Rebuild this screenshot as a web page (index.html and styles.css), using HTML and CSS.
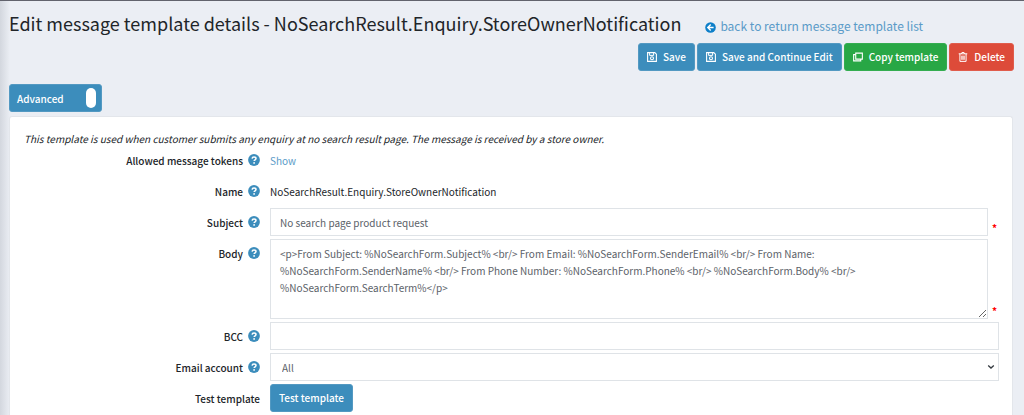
FILE: index.html
```html
<!DOCTYPE html>
<html lang="en">
<head>
    <meta charset="UTF-8">
    <meta name="viewport" content="width=device-width, initial-scale=1.0">
    <title>Edit message template details</title>
    <link rel="stylesheet" href="styles.css">
</head>
<body>
    <!-- shared icons -->
    <svg class="icon-defs" width="0" height="0" aria-hidden="true">
        <symbol id="icon-save" viewBox="0 0 10 10">
            <path d="M.6 .6h7.2l1.6 1.6v7.2H.6z" fill="none" stroke="currentColor" stroke-width="1.1"/>
            <path d="M2.6 1v2.4h4V1" fill="none" stroke="currentColor" stroke-width="1"/>
            <circle cx="5" cy="6.3" r="1.5" fill="none" stroke="currentColor" stroke-width="1.1"/>
        </symbol>
        <symbol id="icon-copy" viewBox="0 0 11 10">
            <path d="M3 .7h7.3v6.6H3z" fill="none" stroke="currentColor" stroke-width="1.2"/>
            <path d="M3 2.4H.7v6.9h7.8v-2" fill="none" stroke="currentColor" stroke-width="1.2"/>
        </symbol>
        <symbol id="icon-trash" viewBox="0 0 10 11">
            <path d="M.3 2h9.4M3.2 2l.6-1.4h2.4L6.8 2M1.6 2v8.3h6.8V2M3.7 4v4.6M5 4v4.6M6.3 4v4.6" fill="none" stroke="currentColor" stroke-width="1.1"/>
        </symbol>
        <symbol id="icon-back" viewBox="0 0 11 11">
            <circle cx="5.5" cy="5.5" r="5.3" fill="currentColor"/>
            <path d="M5.7 2.6L2.8 5.5l2.9 2.9M3 5.5h5.6" fill="none" stroke="#fff" stroke-width="1.4"/>
        </symbol>
        <symbol id="icon-help" viewBox="0 0 12 12">
            <circle cx="6" cy="6" r="5.9" fill="currentColor"/>
            <path d="M4.1 4.6C4.2 3.4 5 2.9 6 2.9c1.1 0 2 .6 2 1.6 0 1.3-1.9 1.3-1.9 2.6" fill="none" stroke="#fff" stroke-width="1.5"/>
            <circle cx="6.1" cy="8.9" r=".9" fill="#fff"/>
        </symbol>
    </svg>

    <div class="content-wrapper">
        <header class="content-header">
            <div class="title-row">
                <h1>Edit message template details - NoSearchResult.Enquiry.StoreOwnerNotification</h1>
                <a href="#" class="back-link"><svg class="icon-back" aria-hidden="true"><use href="#icon-back"/></svg>back to return message template list</a>
            </div>
            <div class="header-buttons">
                <button type="button" class="btn btn-primary"><svg class="icon" aria-hidden="true"><use href="#icon-save"/></svg>Save</button>
                <button type="button" class="btn btn-primary"><svg class="icon" aria-hidden="true"><use href="#icon-save"/></svg>Save and Continue Edit</button>
                <button type="button" class="btn btn-success"><svg class="icon" aria-hidden="true"><use href="#icon-copy"/></svg>Copy template</button>
                <button type="button" class="btn btn-danger"><svg class="icon" aria-hidden="true"><use href="#icon-trash"/></svg>Delete</button>
            </div>
        </header>

        <button type="button" class="btn btn-primary btn-advanced">Advanced<span class="switch"></span></button>

        <form class="panel">
            <p class="intro"><em>This template is used when customer submits any enquiry at no search result page. The message is received by a store owner.</em></p>

            <div class="form-row">
                <div class="label-col">Allowed message tokens <svg class="help" aria-hidden="true"><use href="#icon-help"/></svg></div>
                <div class="field-col"><a href="#">Show</a></div>
            </div>
            <div class="form-row">
                <div class="label-col">Name <svg class="help" aria-hidden="true"><use href="#icon-help"/></svg></div>
                <div class="field-col">NoSearchResult.Enquiry.StoreOwnerNotification</div>
            </div>
            <div class="form-row">
                <label class="label-col" for="subject">Subject <svg class="help" aria-hidden="true"><use href="#icon-help"/></svg></label>
                <div class="field-col">
                    <input type="text" id="subject" class="form-control" value="No search page product request" required>
                    <span class="required">*</span>
                </div>
            </div>
            <div class="form-row">
                <label class="label-col" for="body">Body <svg class="help" aria-hidden="true"><use href="#icon-help"/></svg></label>
                <div class="field-col">
                    <textarea id="body" class="form-control" required>&lt;p&gt;From Subject: %NoSearchForm.Subject% &lt;br/&gt; From Email: %NoSearchForm.SenderEmail% &lt;br/&gt; From Name: %NoSearchForm.SenderName% &lt;br/&gt; From Phone Number: %NoSearchForm.Phone% &lt;br/&gt; %NoSearchForm.Body% &lt;br/&gt; %NoSearchForm.SearchTerm%&lt;/p&gt;</textarea>
                    <span class="required">*</span>
                </div>
            </div>
            <div class="form-row">
                <label class="label-col" for="bcc">BCC <svg class="help" aria-hidden="true"><use href="#icon-help"/></svg></label>
                <div class="field-col"><input type="text" id="bcc" class="form-control"></div>
            </div>
            <div class="form-row">
                <label class="label-col" for="account">Email account <svg class="help" aria-hidden="true"><use href="#icon-help"/></svg></label>
                <div class="field-col">
                    <div class="select-wrap">
                        <select id="account" class="form-control">
                            <option>All</option>
                        </select>
                        <svg class="chevron" viewBox="0 0 8 6" aria-hidden="true"><path d="M1.2 1.4L4 4l2.8-2.6" fill="none" stroke="currentColor" stroke-width="1.3"/></svg>
                    </div>
                </div>
            </div>
            <div class="form-row">
                <div class="label-col">Test template</div>
                <div class="field-col"><button type="button" class="btn btn-primary">Test template</button></div>
            </div>
        </form>
    </div>
</body>
</html>
```
FILE: styles.css
```css
* {
    margin: 0;
    padding: 0;
    box-sizing: border-box;
}

body {
    font-family: "Noto Sans CJK SC", "Noto Sans", sans-serif;
    font-size: 10px;
    line-height: 17px;
    color: #212529;
    background: #ebeef4;
    overflow: hidden;
}

a {
    color: #5a9bc8;
    text-decoration: none;
}

.icon-defs {
    position: absolute;
}

.content-wrapper {
    min-height: 100vh;
    padding: 7px 11px 0 9px;
    border-top: 1px solid #62636d;
    background: linear-gradient(to right, #d3d7de, #ebeef4 10px);
}

.content-header {
    margin-bottom: 13px;
}

.title-row {
    display: flex;
    align-items: baseline;
    gap: 24px;
    height: 30px;
    white-space: nowrap;
}

h1 {
    font-size: 18px;
    font-weight: 400;
    line-height: 30px;
}

.back-link {
    font-size: 12px;
}

.icon-back {
    width: 11px;
    height: 11px;
    margin-right: 4px;
    vertical-align: -2px;
    color: #0d7fc9;
}

.header-buttons {
    display: flex;
    justify-content: flex-end;
    gap: 2px;
    margin: 5px -1px 0 0;
}

.btn {
    display: inline-flex;
    align-items: center;
    height: 28px;
    padding: 0 8px 1px;
    border: 1px solid transparent;
    border-radius: 3px;
    font-family: inherit;
    font-size: 10px;
    font-weight: 500;
    color: #fff;
    cursor: pointer;
}

.btn-primary {
    background: #3c8dbc;
    border-color: #5399c2;
}

.btn-success {
    background: #28a745;
    border-color: #34ad50;
}

.btn-danger {
    background: #dd4b39;
    border-color: #e05c4c;
}

.icon {
    width: 10px;
    height: 10px;
    margin-right: 6px;
}

.btn-advanced {
    display: flex;
    width: 93px;
    justify-content: space-between;
    padding: 0 5px 0 7px;
}

.switch {
    width: 10px;
    height: 20px;
    border-radius: 5px;
    background: #fff;
}

.panel {
    display: flex;
    flex-direction: column;
    gap: 3px;
    min-height: 310px;
    margin-top: 4px;
    padding: 13px 13px 0 14px;
    border: 1px solid #e3e6eb;
    border-bottom: 0;
    border-radius: 3px 3px 0 0;
    background: #fff;
}

.intro {
    margin-bottom: -4px;
}

.form-row {
    display: grid;
    grid-template-columns: 236px 1fr;
    column-gap: 10px;
}

.label-col {
    display: flex;
    align-items: center;
    justify-content: flex-end;
    gap: 5px;
    height: 28px;
    font-weight: 500;
}

.help {
    width: 12px;
    height: 12px;
    color: #3c8dbc;
}

.field-col {
    display: flex;
    align-items: center;
    min-height: 28px;
}

.form-control {
    flex: 1;
    min-width: 0;
    height: 28px;
    padding: 0 9px;
    border: 1px solid #dfe3e7;
    background: #fff;
    font-family: inherit;
    font-size: 10px;
    line-height: 17px;
    color: #5b6168;
}

textarea.form-control {
    height: 80px;
    padding: 5px 24px 5px 9px;
    resize: vertical;
}

.select-wrap {
    display: flex;
    flex: 1;
    position: relative;
}

select.form-control {
    padding: 0 20px 0 11px;
    appearance: none;
}

.chevron {
    position: absolute;
    top: 11px;
    right: 4px;
    width: 8px;
    height: 6px;
    color: #343a40;
    pointer-events: none;
}

.required {
    width: 11px;
    padding-left: 4px;
    align-self: flex-end;
    font-weight: 700;
    color: #f00;
}
```
